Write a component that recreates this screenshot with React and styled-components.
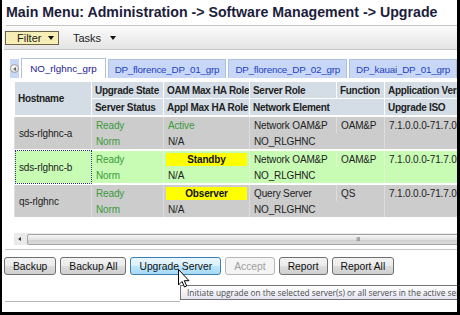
import styled, { createGlobalStyle } from 'styled-components';

const GlobalStyle = createGlobalStyle`
  html, body {
    margin: 0;
    padding: 0;
    background: #fff;
  }
  body {
    font-family: "Liberation Sans", Arial, sans-serif;
  }
`;

const TABS = ['NO_rlghnc_grp', 'DP_florence_DP_01_grp', 'DP_florence_DP_02_grp', 'DP_kauai_DP_01_grp'];

const SERVERS = [
  { host: 'sds-rlghnc-a', role: 'Active', serverRole: 'Network OAM&P', fn: 'OAM&P', tone: 'grey' },
  { host: 'sds-rlghnc-b', role: 'Standby', badge: true, serverRole: 'Network OAM&P', fn: 'OAM&P', tone: 'green', focused: true },
  { host: 'qs-rlghnc', role: 'Observer', badge: true, serverRole: 'Query Server', fn: 'QS', tone: 'grey' },
];

const BUTTONS = [
  { label: 'Backup' },
  { label: 'Backup All' },
  { label: 'Upgrade Server', hover: true },
  { label: 'Accept', disabled: true },
  { label: 'Report' },
  { label: 'Report All' },
];

function App() {
  return (
    <>
      <GlobalStyle />
      <Frame>
        <Title>Main Menu: Administration -&gt; Software Management -&gt; Upgrade</Title>
        <Toolbar>
          <FilterButton>
            Filter <Caret />
          </FilterButton>
          <MenuItem>
            Tasks <Caret />
          </MenuItem>
        </Toolbar>

        <Panel>
          <TabRow>
            <ScrollTab>
              <ScrollCircle />
            </ScrollTab>
            {TABS.map((tab, i) => (
              <Tab key={tab} $active={i === 0}>
                {tab}
              </Tab>
            ))}
          </TabRow>
          <TabBody>
            <TableClip>
              <Grid>
                <colgroup>
                  <col style={{ width: 77 }} />
                  <col style={{ width: 72 }} />
                  <col style={{ width: 86 }} />
                  <col style={{ width: 87 }} />
                  <col style={{ width: 48 }} />
                  <col style={{ width: 85 }} />
                </colgroup>
                <thead>
                  <tr>
                    <Head rowSpan={2}>Hostname</Head>
                    <Head>Upgrade State</Head>
                    <Head>OAM Max HA Role</Head>
                    <Head>Server Role</Head>
                    <Head>Function</Head>
                    <Head>Application Version</Head>
                  </tr>
                  <tr>
                    <Head>Server Status</Head>
                    <Head>Appl Max HA Role</Head>
                    <Head colSpan={2}>Network Element</Head>
                    <Head>Upgrade ISO</Head>
                  </tr>
                </thead>
                {SERVERS.map((s) => (
                  <tbody key={s.host}>
                    <tr>
                      <Cell rowSpan={2} $tone={s.tone} $top $focused={s.focused}>
                        {s.host}
                      </Cell>
                      <Cell $tone={s.tone} $top $ok>Ready</Cell>
                      <Cell $tone={s.tone} $top $ok={!s.badge}>
                        {s.badge ? <Badge>{s.role}</Badge> : s.role}
                      </Cell>
                      <Cell $tone={s.tone} $top>{s.serverRole}</Cell>
                      <Cell $tone={s.tone} $top>{s.fn}</Cell>
                      <Cell $tone={s.tone} $top>7.1.0.0.0-71.7.0</Cell>
                    </tr>
                    <tr>
                      <Cell $tone={s.tone} $ok>Norm</Cell>
                      <Cell $tone={s.tone}>N/A</Cell>
                      <Cell $tone={s.tone} colSpan={2}>NO_RLGHNC</Cell>
                      <Cell $tone={s.tone}></Cell>
                    </tr>
                  </tbody>
                ))}
              </Grid>
            </TableClip>
            <ScrollBar>
              <ScrollArrow />
              <Thumb>
                <Grip>III</Grip>
              </Thumb>
            </ScrollBar>
          </TabBody>
        </Panel>

        <ButtonBar>
          {BUTTONS.map((b) => (
            <Button key={b.label} $hover={b.hover} disabled={b.disabled}>
              {b.label}
            </Button>
          ))}
        </ButtonBar>
        <Rule />

        <Tooltip>Initiate upgrade on the selected server(s) or all servers in the active server group.</Tooltip>
        <Pointer viewBox="0 0 12 19" width="12" height="19">
          <path
            d="M0.5 0.5 L0.5 16 L4 12.5 L6.5 18 L8.7 17 L6.3 11.7 L11 11.7 Z"
            fill="#fff"
            stroke="#000"
            strokeWidth="1"
            strokeLinejoin="round"
          />
        </Pointer>
      </Frame>
    </>
  );
}

const Frame = styled.div`
  position: relative;
  width: 460px;
  height: 315px;
  box-sizing: border-box;
  border-left: 2px solid #000;
  border-right: 3px solid #000;
  border-bottom: 3px solid #000;
  overflow: hidden;
  background: #fff;
`;

const Title = styled.h1`
  margin: 0 0 0 4px;
  padding: 4px 0 0 0;
  height: 21px;
  box-sizing: content-box;
  border-bottom: 1px solid #c6c6c6;
  font-size: 14.2px;
  font-weight: bold;
  color: #1c1c3c;
  white-space: nowrap;
  line-height: 16px;
`;

const Toolbar = styled.div`
  display: flex;
  align-items: center;
  gap: 14px;
  margin-left: 2px;
  padding-left: 1px;
  height: 23px;
  background: linear-gradient(#fbfbfb, #e4e4e4);
  border-bottom: 1px solid #c8c8c8;
  font-size: 11px;
  color: #222;
`;

const FilterButton = styled.div`
  display: flex;
  align-items: center;
  justify-content: space-between;
  width: 54px;
  height: 14px;
  box-sizing: border-box;
  padding: 0 4px 0 11px;
  background: #f6eeb4;
  border: 1px solid #6e6444;
  color: #222;
`;

const MenuItem = styled.div`
  display: flex;
  align-items: center;
  gap: 9px;
`;

const Caret = styled.span`
  width: 0;
  height: 0;
  border-left: 3.5px solid transparent;
  border-right: 3.5px solid transparent;
  border-top: 4px solid #111;
`;

const Panel = styled.div`
  margin: 8px 0 0 3px;
`;

const TabRow = styled.div`
  display: flex;
  align-items: flex-end;
  gap: 2px;
  padding-left: 5px;
  height: 20px;
  white-space: nowrap;
`;

const ScrollTab = styled.div`
  display: flex;
  align-items: center;
  justify-content: center;
  width: 14px;
  height: 19px;
  background: #c9d7f6;
`;

const ScrollCircle = styled.span`
  position: relative;
  width: 9px;
  height: 9px;
  border-radius: 50%;
  background: radial-gradient(circle at 40% 35%, #fff, #d4d4d4);
  border: 1px solid #a0a0a0;
  box-sizing: border-box;

  &::after {
    content: '';
    position: absolute;
    left: 2px;
    top: 2px;
    border-top: 2px solid transparent;
    border-bottom: 2px solid transparent;
    border-right: 3px solid #666;
  }
`;

const Tab = styled.div`
  flex-shrink: 0;
  height: ${({ $active }) => ($active ? '20px' : '19px')};
  box-sizing: border-box;
  padding: 0 ${({ $active }) => ($active ? '8px' : '6px')};
  line-height: 19px;
  font-size: 9.8px;
  letter-spacing: ${({ $active }) => ($active ? '0' : '-0.2px')};
  border: 1px solid ${({ $active }) => ($active ? '#b4c0d8' : '#b0c0e0')};
  border-bottom: none;
  background: ${({ $active }) => ($active ? '#fff' : '#c9d7f6')};
  color: ${({ $active }) => ($active ? '#1a1a90' : '#1d3fc4')};
`;

const TabBody = styled.div`
  display: flex;
  flex-direction: column;
  justify-content: space-between;
  height: 172px;
  box-sizing: border-box;
  padding: 3px 0 4px 9px;
  border-bottom: 1px solid #c4c4c4;
`;

const TableClip = styled.div`
  overflow: hidden;
`;

const Grid = styled.table`
  table-layout: fixed;
  width: 455px;
  border-collapse: collapse;
  font-size: 10px;
  letter-spacing: -0.15px;
  white-space: nowrap;
`;

const Head = styled.th`
  height: 16px;
  padding: 0 0 0 3px;
  text-align: left;
  font-weight: bold;
  letter-spacing: -0.3px;
  color: #222;
  background: #d4dde6;
  border: 1px solid #fff;
  overflow: hidden;
`;

const Cell = styled.td`
  height: 16px;
  padding: 0 0 0 4px;
  color: ${({ $ok }) => ($ok ? '#3b9a3b' : '#222')};
  background: ${({ $tone }) => ($tone === 'green' ? '#c8fcb4' : '#cccccc')};
  border-left: 1px solid ${({ $tone }) => ($tone === 'green' ? '#def9d2' : '#dddddd')};
  border-top: ${({ $top }) => ($top ? '2px solid #fff' : 'none')};
  outline: ${({ $focused }) => ($focused ? '1px dotted #30308a' : 'none')};
  outline-offset: -1px;
  overflow: hidden;
`;

const Badge = styled.div`
  margin-left: -2px;
  margin-right: 2px;
  height: 13px;
  line-height: 13px;
  background: #ffff00;
  text-align: center;
  font-weight: bold;
  color: #111;
`;

const ScrollBar = styled.div`
  display: flex;
  align-items: center;
  gap: 2px;
  height: 12px;
  overflow: hidden;
  background: #eaeaea;
`;

const ScrollArrow = styled.span`
  position: relative;
  flex-shrink: 0;
  width: 11px;
  height: 12px;

  &::after {
    content: '';
    position: absolute;
    left: 4px;
    top: 4px;
    border-top: 2px solid transparent;
    border-bottom: 2px solid transparent;
    border-right: 3px solid #333;
  }
`;

const Thumb = styled.div`
  flex-shrink: 0;
  display: flex;
  align-items: center;
  justify-content: center;
  width: 662px;
  height: 11px;
  box-sizing: border-box;
  border: 1px solid #a2a2a2;
  border-radius: 2px;
  background: linear-gradient(#f6f6f6, #e2e2e2 50%, #cfcfcf 51%, #dadada);
`;

const Grip = styled.span`
  font-size: 6px;
  letter-spacing: -0.5px;
  color: #666;
`;

const ButtonBar = styled.div`
  display: flex;
  gap: 4px;
  margin: 7px 0 0 2px;
`;

const Button = styled.button`
  height: 18px;
  padding: 0 8px;
  font-family: "Liberation Sans", Arial, sans-serif;
  font-size: 10.3px;
  color: #111;
  border: 1px solid ${({ $hover }) => ($hover ? '#3c7fb1' : '#707070')};
  border-radius: 3px;
  background: ${({ $hover }) =>
    $hover
      ? 'linear-gradient(#eaf6fd, #d9f0fc 50%, #bee6fd 51%, #a7d9f5)'
      : 'linear-gradient(#f2f2f2, #ebebeb 50%, #dddddd 51%, #cfcfcf)'};

  &:disabled {
    color: #a0a0a0;
    border-color: #b6b6b6;
    background: #f4f4f4;
  }
`;

const Rule = styled.div`
  width: 175px;
  margin: 26px 0 0 3px;
  border-top: 1px solid #b8b8b8;
`;

const Tooltip = styled.div`
  position: absolute;
  left: 178px;
  top: 285px;
  width: 320px;
  height: 15px;
  box-sizing: border-box;
  padding: 0 0 0 6px;
  border: 1px solid #767676;
  background: linear-gradient(#ffffff, #e4e5f0);
  font-family: "Open Sans", "Noto Sans", sans-serif;
  font-size: 8.3px;
  line-height: 13px;
  color: #4c4c4c;
  white-space: nowrap;
  overflow: hidden;
`;

const Pointer = styled.svg`
  position: absolute;
  left: 176px;
  top: 269px;
`;

export default App;
